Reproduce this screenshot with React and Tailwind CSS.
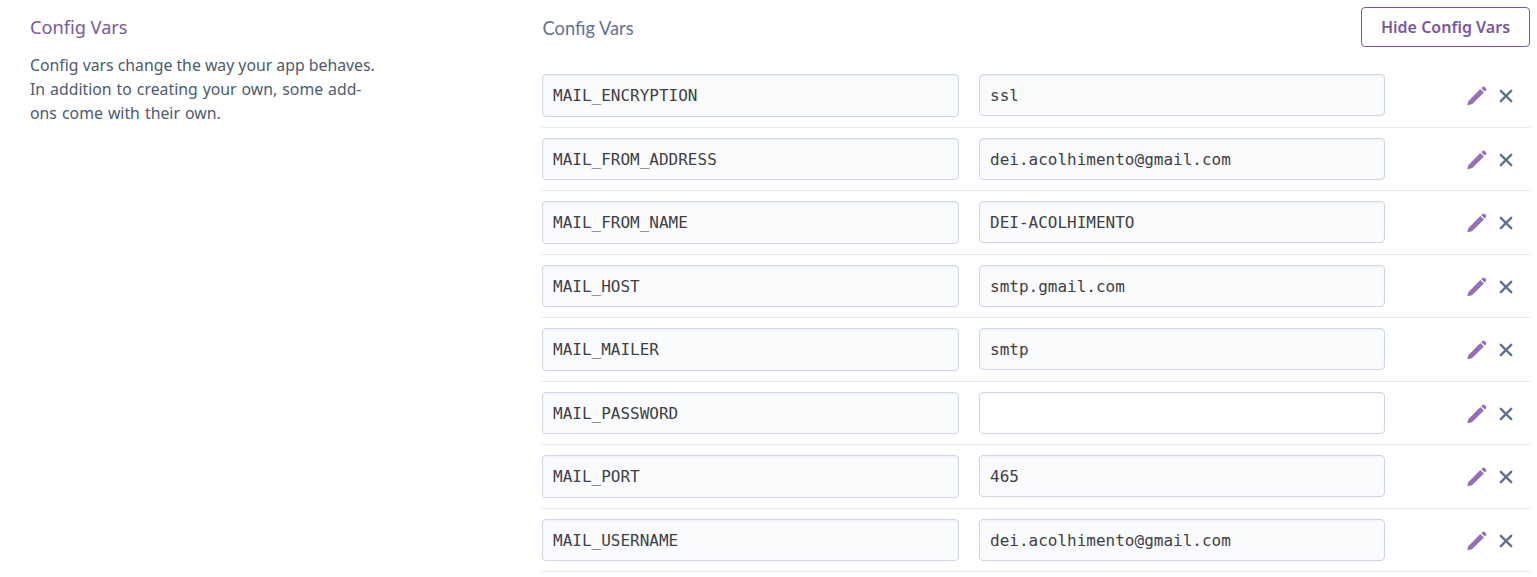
const configVars = [
  { name: 'MAIL_ENCRYPTION', value: 'ssl' },
  { name: 'MAIL_FROM_ADDRESS', value: 'dei.acolhimento@gmail.com' },
  { name: 'MAIL_FROM_NAME', value: 'DEI-ACOLHIMENTO' },
  { name: 'MAIL_HOST', value: 'smtp.gmail.com' },
  { name: 'MAIL_MAILER', value: 'smtp' },
  { name: 'MAIL_PASSWORD', value: '' },
  { name: 'MAIL_PORT', value: '465' },
  { name: 'MAIL_USERNAME', value: 'dei.acolhimento@gmail.com' },
];

const fieldText =
  "rounded-[4px] border border-[#cfd7e6] px-[10px] font-['DejaVu_Sans_Mono',monospace] text-[16px] leading-[41px] text-[#3f3f44] shadow-[inset_0_1px_2px_rgba(207,215,230,0.25)]";

function PencilIcon() {
  return (
    <svg className="h-5 w-5" viewBox="0 0 20 20" fill="#9470b6" aria-hidden="true">
      <path d="M0.2 19.3 L1.5 15 L13.3 3 L16.9 6.5 L5 18.2 Z" />
      <path d="M14.2 2.1 L15.5 0.9 Q16.6 0 17.7 0.9 L18.9 2.1 Q19.8 3.1 18.9 4.2 L17.7 5.6 Z" />
    </svg>
  );
}

function CrossIcon() {
  return (
    <svg className="h-[14px] w-[14px]" viewBox="0 0 14 14" fill="none" stroke="#62738f" strokeWidth="2.4" strokeLinecap="round" aria-hidden="true">
      <path d="M1.8 1.8 L12.2 12.2 M12.2 1.8 L1.8 12.2" />
    </svg>
  );
}

function ConfigRow({ name, value }) {
  return (
    <div className="flex h-[63.5px] items-start border-b border-[#e4e8f2] pt-[10px]">
      <div className={`${fieldText} h-[42.5px] w-[417px] bg-[#fafbfd]`}>{name}</div>
      <div className={`${fieldText} ml-5 h-[42px] w-[406px] ${value ? 'bg-[#fafbfd]' : 'bg-white'}`}>{value}</div>
      <div className="ml-auto flex items-center gap-[12px] pr-[17px] pt-[12px]">
        <button type="button" aria-label="Edit"><PencilIcon /></button>
        <button type="button" aria-label="Remove"><CrossIcon /></button>
      </div>
    </div>
  );
}

export default function App() {
  return (
    <main className="flex h-[577px] w-[1537px] overflow-hidden bg-white pl-[30px] pr-[7px]">
      <section className="w-[512px] shrink-0 pt-[14px] font-['Noto_Sans',sans-serif]">
        <h2 className="text-[18.2px] leading-[27px] text-[#79589f]">Config Vars</h2>
        <p className="mt-[12px] w-[350px] whitespace-nowrap text-[15.8px] leading-6 text-[#4c5a70]">
          Config vars change the way your app behaves.
          <br />
          <span className="[word-spacing:0.9px]">In addition to creating your own, some add-</span>
          <br />
          <span className="[word-spacing:1px]">ons come with their own.</span>
        </p>
      </section>
      <section className="flex-1">
        <header className="flex h-16 items-start justify-between pt-[7px]">
          <h3 className="pl-[0.5px] pt-[8px] font-[Lato,sans-serif] text-[18.3px] leading-[27px] text-[#62738f]">Config Vars</h3>
          <button type="button" className="h-10 w-[169px] whitespace-nowrap rounded-[4px] border border-[#79589f] font-['Noto_Sans',sans-serif] text-[16px] font-semibold text-[#79589f]">
            Hide Config Vars
          </button>
        </header>
        {configVars.map((item) => (
          <ConfigRow key={item.name} name={item.name} value={item.value} />
        ))}
      </section>
    </main>
  );
}
